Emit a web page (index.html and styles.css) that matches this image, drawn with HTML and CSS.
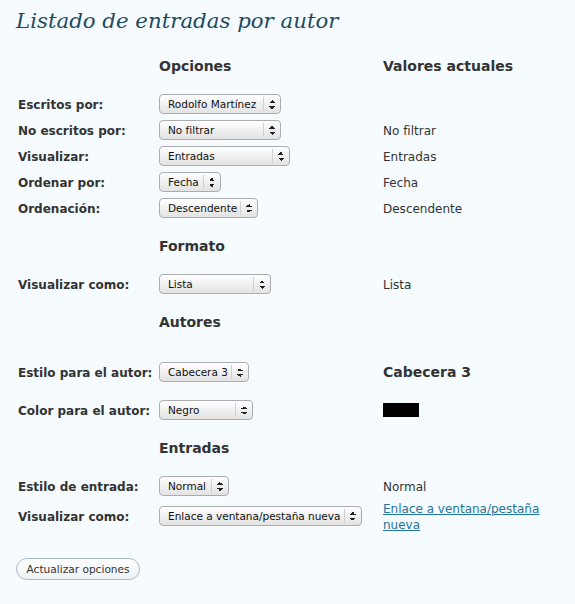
FILE: index.html
```html
<!DOCTYPE html>
<html lang="es">
<head>
<meta charset="utf-8">
<title>Listado de entradas por autor</title>
<link rel="stylesheet" href="styles.css">
</head>
<body>
<div class="wrap">
  <h2 class="title">Listado de entradas por autor</h2>
  <form class="opts">
    <div class="row head">
      <span></span>
      <h3 class="col-title">Opciones</h3>
      <h3 class="col-title">Valores actuales</h3>
    </div>
    <div class="row">
      <label class="lbl">Escritos por:</label>
      <span class="sel w122"><span class="val">Rodolfo Martínez</span><span class="arr"></span></span>
      <span class="cur"></span>
    </div>
    <div class="row">
      <label class="lbl">No escritos por:</label>
      <span class="sel w122"><span class="val">No filtrar</span><span class="arr"></span></span>
      <span class="cur">No filtrar</span>
    </div>
    <div class="row">
      <label class="lbl">Visualizar:</label>
      <span class="sel w131"><span class="val">Entradas</span><span class="arr"></span></span>
      <span class="cur">Entradas</span>
    </div>
    <div class="row">
      <label class="lbl">Ordenar por:</label>
      <span class="sel w62"><span class="val">Fecha</span><span class="arr"></span></span>
      <span class="cur">Fecha</span>
    </div>
    <div class="row">
      <label class="lbl">Ordenación:</label>
      <span class="sel w99"><span class="val">Descendente</span><span class="arr"></span></span>
      <span class="cur">Descendente</span>
    </div>

    <div class="row head">
      <span></span>
      <h3 class="col-title">Formato</h3>
      <span></span>
    </div>
    <div class="row">
      <label class="lbl">Visualizar como:</label>
      <span class="sel w112"><span class="val">Lista</span><span class="arr"></span></span>
      <span class="cur">Lista</span>
    </div>

    <div class="row head">
      <span></span>
      <h3 class="col-title">Autores</h3>
      <span></span>
    </div>
    <div class="row tall">
      <label class="lbl">Estilo para el autor:</label>
      <span class="sel w90"><span class="val">Cabecera 3</span><span class="arr"></span></span>
      <h3 class="cur-h3">Cabecera 3</h3>
    </div>
    <div class="row">
      <label class="lbl">Color para el autor:</label>
      <span class="sel w94"><span class="val">Negro</span><span class="arr"></span></span>
      <span class="cur"><span class="swatch"></span></span>
    </div>

    <div class="row head">
      <span></span>
      <h3 class="col-title">Entradas</h3>
      <span></span>
    </div>
    <div class="row">
      <label class="lbl">Estilo de entrada:</label>
      <span class="sel w70"><span class="val">Normal</span><span class="arr"></span></span>
      <span class="cur">Normal</span>
    </div>
    <div class="row link-row">
      <label class="lbl">Visualizar como:</label>
      <span class="sel w202"><span class="val">Enlace a ventana/pestaña nueva</span><span class="arr"></span></span>
      <span class="cur"><a href="#" class="lnk">Enlace a ventana/pestaña nueva</a></span>
    </div>

    <div class="actions">
      <button type="button" class="btn">Actualizar opciones</button>
    </div>
  </form>
</div>
</body>
</html>
```

FILE: styles.css
```css
html, body {
  margin: 0;
  padding: 0;
  background: #f5fbfe;
}
body {
  font-family: "DejaVu Sans", "Liberation Sans", sans-serif;
  font-size: 12px;
  color: #333;
}
.wrap {
  padding: 0 16px 0 16px;
}
.title {
  margin: 0;
  padding-top: 6px;
  height: 35px;
  font-family: "DejaVu Serif", Georgia, serif;
  font-style: italic;
  font-weight: normal;
  font-size: 21.3px;
  line-height: 30px;
  color: #1e4a5f;
}
.opts {
  display: flex;
  flex-direction: column;
}
.row {
  display: grid;
  grid-template-columns: 143px 224px 1fr;
  align-items: center;
  min-height: 26px;
}
.row.head {
  margin: 12px 0;
}
.row.tall {
  min-height: 50px;
}
.row.link-row {
  min-height: 34px;
}
.col-title {
  margin: 0;
  font-size: 14px;
  font-weight: bold;
  color: #333;
  line-height: 26px;
}
.lbl {
  font-weight: bold;
  padding-left: 2px;
  padding-top: 2px;
  color: #333;
}
.cur {
  color: #333;
  line-height: 16px;
  padding-top: 2px;
}
.cur-h3 {
  margin: 0;
  font-size: 14px;
  font-weight: bold;
  color: #333;
}
.swatch {
  display: block;
  width: 36px;
  height: 14px;
  margin-top: -2px;
  background: #000;
}
.lnk {
  color: #21759b;
  text-decoration: underline;
}
.sel {
  display: flex;
  align-items: stretch;
  box-sizing: border-box;
  height: 20px;
  border: 1px solid #a9adb2;
  border-radius: 4px;
  background: linear-gradient(#ffffff, #f2f2f2 45%, #e3e3e3);
  font-size: 10.5px;
  color: #111;
  box-shadow: 0 1px 0 rgba(255,255,255,0.6);
}
.sel .val {
  flex: 1;
  padding-left: 8px;
  line-height: 19px;
  white-space: nowrap;
  overflow: hidden;
}
.sel .arr {
  width: 16px;
  border-left: 1px solid #d0d0d0;
  margin: 2px 0;
  background:
    linear-gradient(to bottom right, transparent 50%, #222 50%) no-repeat,
    linear-gradient(to bottom left, transparent 50%, #222 50%) no-repeat,
    linear-gradient(to top right, transparent 50%, #222 50%) no-repeat,
    linear-gradient(to top left, transparent 50%, #222 50%) no-repeat;
  background-size: 3px 3px;
  background-position: 5px 3px, 8px 3px, 5px 9px, 8px 9px;
}
.w122 { width: 122px; }
.w131 { width: 131px; }
.w62 { width: 62px; }
.w99 { width: 99px; }
.w112 { width: 112px; }
.w90 { width: 90px; }
.w94 { width: 94px; }
.w70 { width: 70px; }
.w202 { width: 203px; }
.actions {
  margin-top: 25px;
}
.btn {
  height: 22px;
  padding: 0 9.5px;
  border: 1px solid #a8bccc;
  border-radius: 11px;
  background: linear-gradient(#ffffff, #eef2f5);
  font-family: "DejaVu Sans", "Liberation Sans", sans-serif;
  font-size: 10.6px;
  color: #333;
}
```
